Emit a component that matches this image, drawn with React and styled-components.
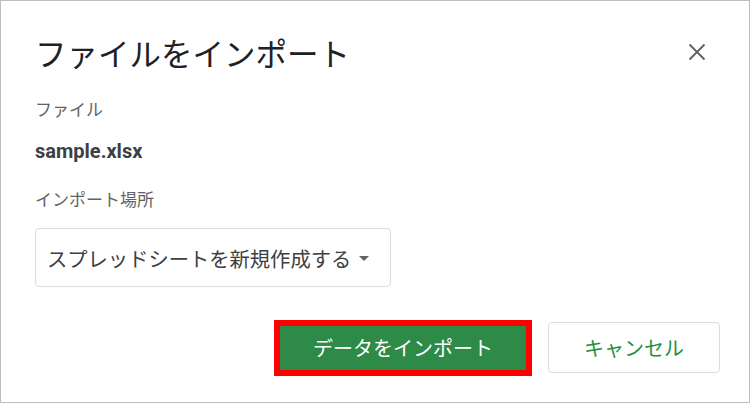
import React from "react";
import styled, { createGlobalStyle } from "styled-components";

// style
const GlobalStyle = createGlobalStyle`
  html, body {
    margin: 0;
    padding: 0;
    background: #fff;
  }
  body {
    font-family: Roboto, "Noto Sans CJK JP", sans-serif;
  }
`;

const Dialog = styled.div`
  box-sizing: border-box;
  width: 750px;
  height: 403px;
  border: 1px solid #bdbdbd;
  background: #fff;
  padding: 35px 29px 0 34px;
  display: flex;
  flex-direction: column;
`;

const Header = styled.div`
  display: flex;
  justify-content: space-between;
  align-items: flex-start;
`;

const Title = styled.h1`
  margin: 0;
  font-size: 31.5px;
  font-weight: 400;
  line-height: 40px;
  color: #202124;
`;

const CloseButton = styled.button`
  width: 40px;
  height: 40px;
  margin: -4px 3px 0 0;
  padding: 0;
  border: none;
  background: none;
  display: flex;
  align-items: center;
  justify-content: center;
  cursor: pointer;
`;

const Label = styled.div`
  font-size: 17px;
  line-height: 24px;
  color: #5f6368;
  margin-top: ${props => props.gap}px;
`;

const FileName = styled.div`
  font-size: 20px;
  font-weight: 700;
  line-height: 24px;
  color: #3c4043;
  margin-top: 17px;
`;

const Select = styled.div`
  box-sizing: border-box;
  width: 356px;
  height: 59px;
  margin-top: 16px;
  padding: 0 21px 0 11px;
  border: 1px solid #dadce0;
  border-radius: 4px;
  display: flex;
  align-items: center;
  justify-content: space-between;
  font-size: 20.3px;
  color: #3c4043;
  cursor: pointer;
`;

const Arrow = styled.span`
  width: 0;
  height: 0;
  border-left: 5px solid transparent;
  border-right: 5px solid transparent;
  border-top: 5px solid #5f6368;
  margin-top: 1px;
`;

const Footer = styled.div`
  display: flex;
  justify-content: flex-end;
  align-items: center;
  gap: 22px;
  margin-top: 35px;
  height: 51px;
`;

const Button = styled.button`
  box-sizing: border-box;
  font-family: inherit;
  font-size: 20px;
  cursor: pointer;
  display: flex;
  align-items: center;
  justify-content: center;
  border-radius: 4px;
  width: ${props => props.w}px;
  height: ${props => props.h}px;
  background: ${props => (props.primary ? "#2d8a47" : "#fff")};
  color: ${props => (props.primary ? "#fff" : "#1e8e3e")};
  border: ${props => (props.primary ? "none" : "1px solid #dadce0")};
  ${props =>
    props.highlighted &&
    `
    border-radius: 0;
    outline: 6px solid #ff0000;
  `}
`;

const CloseIcon = () => (
  <svg width="18" height="18" viewBox="0 0 18 18">
    <path
      d="M1.5 1.5 L16.5 16.5 M16.5 1.5 L1.5 16.5"
      stroke="#5f6368"
      strokeWidth="1.9"
      fill="none"
    />
  </svg>
);

const App = () => {
  return (
    <>
      <GlobalStyle />
      <Dialog>
        <Header>
          <Title>ファイルをインポート</Title>
          <CloseButton aria-label="閉じる">
            <CloseIcon />
          </CloseButton>
        </Header>
        <Label gap={22}>ファイル</Label>
        <FileName>sample.xlsx</FileName>
        <Label gap={25}>インポート場所</Label>
        <Select>
          スプレッドシートを新規作成する
          <Arrow />
        </Select>
        <Footer>
          <Button primary highlighted w={246} h={44}>
            データをインポート
          </Button>
          <Button w={172} h={51}>
            キャンセル
          </Button>
        </Footer>
      </Dialog>
    </>
  );
};

export default App;
